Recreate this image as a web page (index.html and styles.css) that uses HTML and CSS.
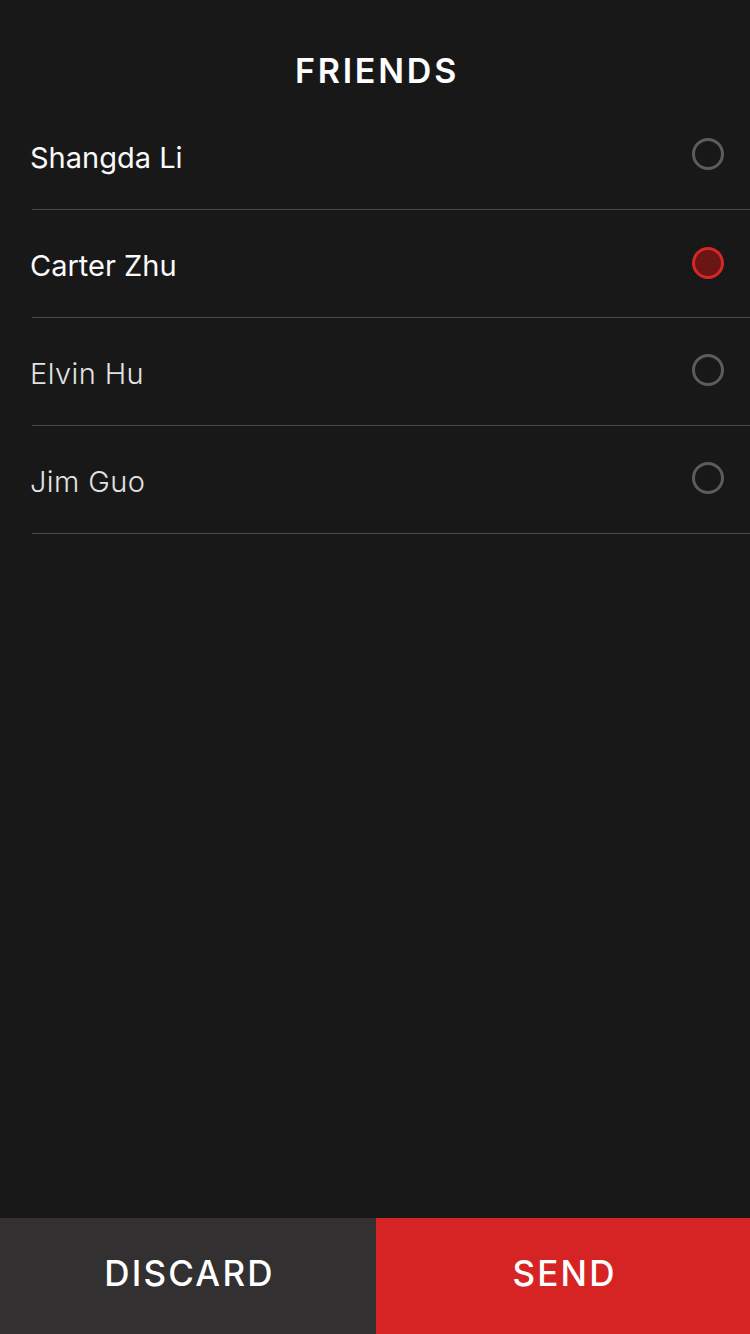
FILE: index.html
```html
<!DOCTYPE html>
<html>
<head>
<meta charset="utf-8">
<link rel="stylesheet" href="styles.css">
</head>
<body>
<div class="screen">
  <header class="header"><h1 class="title">FRIENDS</h1></header>
  <ul class="list">
    <li class="row"><span class="name">Shangda Li</span><span class="radio"></span></li>
    <li class="row"><span class="name">Carter Zhu</span><span class="radio selected"></span></li>
    <li class="row"><span class="name light">Elvin Hu</span><span class="radio"></span></li>
    <li class="row"><span class="name light">Jim Guo</span><span class="radio"></span></li>
  </ul>
  <div class="spacer"></div>
  <footer class="actions">
    <button class="btn discard">DISCARD</button>
    <button class="btn send">SEND</button>
  </footer>
</div>
</body>
</html>
```

FILE: styles.css
```css
html, body {
  margin: 0;
  padding: 0;
  background: #181818;
}
.screen {
  width: 750px;
  height: 1334px;
  display: flex;
  flex-direction: column;
  font-family: Inter, "Noto Sans", sans-serif;
  color: #fff;
}
.header {
  height: 102px;
  display: flex;
  align-items: center;
  justify-content: center;
  box-sizing: border-box;
  padding-top: 40px;
  padding-left: 4px;
}
.title {
  margin: 0;
  font-size: 34px;
  font-weight: 600;
  letter-spacing: 2.8px;
  line-height: 1;
}
.list {
  list-style: none;
  margin: 0;
  padding: 0;
}
.row {
  height: 108px;
  box-sizing: border-box;
  margin-left: 32px;
  padding-right: 26px;
  border-bottom: 1px solid #474747;
  display: flex;
  align-items: center;
  justify-content: space-between;
}
.name {
  margin-left: -2px;
  padding-top: 3px;
  font-size: 29px;
  font-weight: 400;
  color: #fafafa;
}
.name.light {
  font-weight: 300;
  letter-spacing: 0.4px;
  color: #e2e2e2;
}
.radio {
  width: 32px;
  height: 32px;
  box-sizing: border-box;
  border-radius: 50%;
  border: 3px solid #5c5c5c;
  margin-bottom: 3px;
}
.radio.selected {
  border-color: #d92626;
  background: #6b1515;
  margin-bottom: 2px;
}
.spacer {
  flex: 1;
}
.actions {
  height: 116px;
  display: flex;
}
.btn {
  border: 0;
  margin: 0;
  padding: 0 0 6px 3px;
  font-family: Inter, "Noto Sans", sans-serif;
  font-size: 35px;
  font-weight: 500;
  letter-spacing: 2.2px;
  color: #fff;
}
.discard {
  width: 376px;
  background: #323031;
}
.send {
  flex: 1;
  background: #d62424;
}
```
